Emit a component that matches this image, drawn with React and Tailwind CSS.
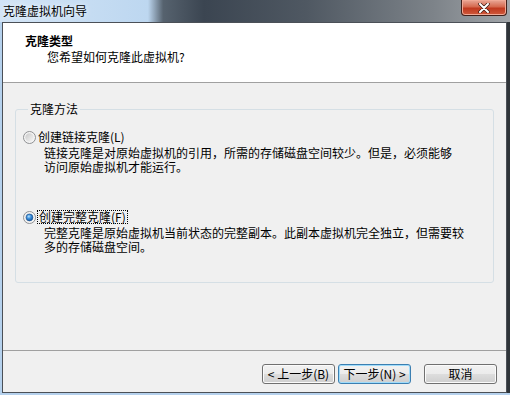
import React from "react";

function Radio({ checked }) {
  return (
    <svg width="13" height="13" viewBox="0 0 13 13" className="shrink-0">
      <defs>
        <linearGradient id="ring" x1="0" y1="0" x2="1" y2="1">
          <stop offset="0" stopColor="#c9c9c9" />
          <stop offset="1" stopColor="#f7f7f7" />
        </linearGradient>
        <radialGradient id="dot" cx="0.4" cy="0.35" r="0.7">
          <stop offset="0" stopColor="#b6e3ff" />
          <stop offset="0.45" stopColor="#3b8fdc" />
          <stop offset="1" stopColor="#0d4f98" />
        </radialGradient>
      </defs>
      <circle cx="6.5" cy="6.5" r="6" fill="#f4f4f4" stroke="#8f9193" />
      <circle cx="6.5" cy="6.5" r="4.2" fill="url(#ring)" />
      {checked ? <circle cx="6.5" cy="6.5" r="3.4" fill="url(#dot)" stroke="#1c5390" strokeWidth="0.6" /> : null}
    </svg>
  );
}

function Button({ children, primary }) {
  return (
    <button
      className={
        primary
          ? "flex h-[20px] w-[73px] items-center justify-center rounded-[3px] border border-[#3c7fb1] bg-[linear-gradient(#f2f2f2,#ebebeb_50%,#dddddd_50%,#cfcfcf)] leading-[18px] shadow-[inset_0_0_0_1px_#9fdcfb]"
          : "flex h-[20px] w-[73px] items-center justify-center rounded-[3px] border border-[#707070] bg-[linear-gradient(#f2f2f2,#ebebeb_50%,#dddddd_50%,#cfcfcf)] leading-[18px] shadow-[inset_0_0_0_1px_#fbfbfb]"
      }
    >
      {children}
    </button>
  );
}

export default function App() {
  return (
    <div className="flex h-[395px] w-[510px] flex-col overflow-hidden bg-[#3d434a] font-['Noto_Sans_CJK_SC',sans-serif] text-[12px] text-black">
      {/* title bar */}
      <div className="flex h-[22px] shrink-0 items-start justify-between bg-[linear-gradient(90deg,#d2e4f6_0%,#bdd7f0_29%,#56626e_32%,#3b4551_40%,#4f5862_60%,#7d8389_85%,#a1a5a9_100%)] pr-[3px]">
        <span className="pl-[3px] leading-[22px] [text-shadow:0_0_6px_#ffffff]">克隆虚拟机向导</span>
        <div className="flex h-[16px] w-[46px] items-center justify-center rounded-b-[4px] border border-t-0 border-[#41201a] bg-[linear-gradient(#e9a897,#d5694f_45%,#c0391f_55%,#cf5a3c)] shadow-[inset_0_0_0_1px_#f0a996]">
          <svg width="12" height="10" viewBox="0 0 12 10">
            <path d="M2 1 L10 9 M10 1 L2 9" stroke="#3a1a14" strokeWidth="3.4" strokeLinecap="round" />
            <path d="M2 1 L10 9 M10 1 L2 9" stroke="#ffffff" strokeWidth="2" strokeLinecap="round" />
          </svg>
        </div>
      </div>

      {/* window frame */}
      <div className="flex flex-1 bg-[#b5d1ed] pb-[2px] pl-[2px]">
        <div className="flex flex-1 flex-col border border-[#4b5057] bg-[#f0f0f0]">
          {/* header */}
          <div className="h-[60px] shrink-0 border-b border-[#a0a0a0] bg-white pl-[22px] pt-[11px]">
            <div className="font-bold leading-[14px]">克隆类型</div>
            <div className="mt-[2px] pl-[22px] leading-[14px]">您希望如何克隆此虚拟机?</div>
          </div>

          {/* body */}
          <div className="px-[12px] pt-[19px]">
            <fieldset className="rounded-[3px] border border-[#d5dfe5] pb-[28px] pl-[7px] pt-[14px]">
              <legend className="ml-[5px] px-[2px] leading-[14px]">克隆方法</legend>

              <div className="flex h-[14px] items-center">
                <Radio />
                <span className="ml-[2px] leading-[14px]">创建链接克隆(L)</span>
              </div>
              <div className="ml-[21px] mt-[2px] leading-[14px]">
                <div>链接克隆是对原始虚拟机的引用，所需的存储磁盘空间较少。但是，必须能够</div>
                <div>访问原始虚拟机才能运行。</div>
              </div>

              <div className="mt-[36px] flex h-[14px] items-center">
                <Radio checked />
                <span className="ml-[1px] border border-dotted border-black px-[1px] leading-[12px]">创建完整克隆(F)</span>
              </div>
              <div className="ml-[21px] mt-[2px] leading-[14px]">
                <div>完整克隆是原始虚拟机当前状态的完整副本。此副本虚拟机完全独立，但需要较</div>
                <div>多的存储磁盘空间。</div>
              </div>
            </fieldset>
          </div>

          {/* footer */}
          <div className="mt-auto border-t border-[#a0a0a0] pb-[8px] pr-[9px] pt-[13px]">
            <div className="flex justify-end">
              <Button>&lt; 上一步(B)</Button>
              <div className="ml-[3px]">
                <Button primary>下一步(N) &gt;</Button>
              </div>
              <div className="ml-[13px]">
                <Button>取消</Button>
              </div>
            </div>
          </div>
        </div>
        <div className="w-[3px] bg-[#2f3439]" />
      </div>
    </div>
  );
}
